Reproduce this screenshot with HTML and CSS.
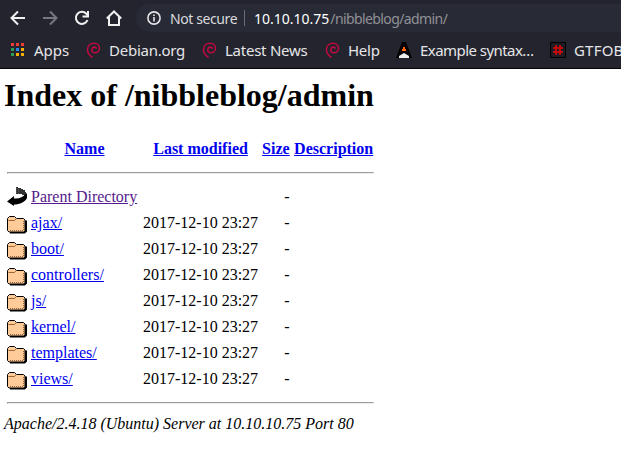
FILE: index.html
```html
<!DOCTYPE html>
<html lang="en">
<head>
<meta charset="utf-8">
<title>Index of /nibbleblog/admin</title>
<link rel="stylesheet" href="styles.css">
</head>
<body>
<svg class="defs" width="0" height="0">
  <symbol id="swirl" viewBox="-1 0 16 16"><path d="M6.500 15.500c-3-2-5.200-4.700-5-8.500C1.800 3.500 4.500 1.200 8 1.200c3.500 0 5.500 2.500 5.500 5s-2 4.500-4.500 4.500S5.500 9 5.800 7.300c.5-2.600 4-3.100 4.700-.5" fill="none" stroke="#bd0a40" stroke-width="1.600"/></symbol>
  <symbol id="folder" viewBox="0 0 20 22"><path d="M3 20.500h14.500l1.500-1.500V8.500" fill="none" stroke="#000" stroke-width="2"/><path d="M.5 18.500v-12l2-2h5l2 2h7l1.500 1.500v11l-1 1h-15z" fill="#fc9" stroke="#000"/><path d="M1.500 8.500h6l2-2" fill="none" stroke="#963"/><path d="M3 18.500h13.500V8" fill="none" stroke="#963" stroke-dasharray="1 1"/></symbol>
</svg>
<header class="browser">
  <div class="toolbar">
    <svg class="nav" viewBox="0 0 16 16"><path d="M15 8H2M8 1.500 1.500 8 8 14.500" /></svg>
    <svg class="nav dim" viewBox="0 0 16 16"><path d="M1 8h13M8 1.500 14.500 8 8 14.500" /></svg>
    <svg class="nav" viewBox="0 0 16 16"><path d="M13.500 10A6 6 0 1 1 12.300 3.800L14 5.500M14 1v5.500H8.500" /></svg>
    <svg class="nav" viewBox="0 0 16 16"><path d="M.8 8.500 8 1.500l7.200 7M3 7v8h3.500M13 7v8H9.500M6 15h4" /></svg>
    <div class="address">
      <svg class="info" viewBox="0 0 14 14"><circle cx="7" cy="7" r="6.100"/><path d="M7 6v4.500M7 3.500v1.500"/></svg>
      <span class="state">Not secure</span><i class="divider"></i><span class="host">10.10.10.75</span><span class="path">/nibbleblog/admin/</span>
    </div>
  </div>
  <nav class="bookmarks">
    <a class="mark apps"><svg width="13" height="13" viewBox="0 0 13 13"><path fill="#f33b35" d="M0 0h3v3H0zM5 0h3v3H5zM10 0h3v3h-3z"/><path fill="#2f9e55" d="M0 5h3v3H0zM0 10h3v3H0z"/><path fill="#2684fc" d="M5 5h3v3H5z"/><path fill="#fbb003" d="M10 5h3v3h-3zM5 10h3v3H5zM10 10h3v3h-3z"/></svg>Apps</a>
    <a class="mark debian"><svg width="16" height="16"><use href="#swirl"/></svg>Debian.org</a>
    <a class="mark news"><svg width="16" height="16"><use href="#swirl"/></svg>Latest News</a>
    <a class="mark help"><svg width="16" height="16"><use href="#swirl"/></svg>Help</a>
    <a class="mark syntax"><svg width="16" height="16" viewBox="0 0 16 16"><path d="M6 0h4l6 16H0z"/><path fill="#f60" d="M7 5h2v2h1v2H6V7h1z"/><path fill="#eee" d="M3 16v-2l5-3 5 3v2z"/></svg>Example syntax…</a>
    <a class="mark gtfo"><svg width="16" height="16" viewBox="0 0 16 16"><path fill="#1b1c24" stroke="#000" d="M.5.500h15v15H.5z"/><path stroke="#c00b0b" stroke-width="2" d="M6 3v10M10 3v10M3 6h10M3 10h10"/></svg>GTFOBins</a>
  </nav>
</header>
<main>
<h1>Index of /nibbleblog/admin</h1>
<table>
<tr><th class="icon"></th><th class="name"><a href="#">Name</a></th><th><a href="#">Last modified</a></th><th><a href="#">Size</a></th><th class="desc"><a href="#">Description</a></th></tr>
<tr><th colspan="5"><hr></th></tr>
<tr><td class="icon"><svg width="20" height="22" viewBox="0 0 20 22"><path d="M9 1h2v1h3v1h2v1h2v2h1v2h1v3h-3V9h-2V8H9z" fill="#333"/><path d="M9.500 2v6M11.500 3v6" stroke="#777" stroke-width=".6" stroke-dasharray="1 1"/><path d="M0 15.500 7 10v2.500c5 .5 9-1 12-5h1V12c-2 4-7 6.500-13 6.500V20z"/></svg></td><td><a class="visited" href="#">Parent Directory</a></td><td></td><td class="num">-</td><td></td></tr>
<tr><td class="icon"><svg width="20" height="22"><use href="#folder"/></svg></td><td><a href="#">ajax/</a></td><td class="num">2017-12-10 23:27</td><td class="num">-</td><td></td></tr>
<tr><td class="icon"><svg width="20" height="22"><use href="#folder"/></svg></td><td><a href="#">boot/</a></td><td class="num">2017-12-10 23:27</td><td class="num">-</td><td></td></tr>
<tr><td class="icon"><svg width="20" height="22"><use href="#folder"/></svg></td><td><a href="#">controllers/</a></td><td class="num">2017-12-10 23:27</td><td class="num">-</td><td></td></tr>
<tr><td class="icon"><svg width="20" height="22"><use href="#folder"/></svg></td><td><a href="#">js/</a></td><td class="num">2017-12-10 23:27</td><td class="num">-</td><td></td></tr>
<tr><td class="icon"><svg width="20" height="22"><use href="#folder"/></svg></td><td><a href="#">kernel/</a></td><td class="num">2017-12-10 23:27</td><td class="num">-</td><td></td></tr>
<tr><td class="icon"><svg width="20" height="22"><use href="#folder"/></svg></td><td><a href="#">templates/</a></td><td class="num">2017-12-10 23:27</td><td class="num">-</td><td></td></tr>
<tr><td class="icon"><svg width="20" height="22"><use href="#folder"/></svg></td><td><a href="#">views/</a></td><td class="num">2017-12-10 23:27</td><td class="num">-</td><td></td></tr>
<tr><th colspan="5"><hr></th></tr>
</table>
<address>Apache/2.4.18 (Ubuntu) Server at 10.10.10.75 Port 80</address>
</main>
</body>
</html>
```
FILE: styles.css
```css
body { margin: 0; background: #fff; font: 16px "Liberation Serif", serif; overflow: hidden; }
.defs { display: block; }
.browser { height: 69px; box-sizing: border-box; border-bottom: 1px solid #050507; background: #23242e; font: 15px "Noto Sans", sans-serif; overflow: hidden; }
.toolbar { display: flex; align-items: center; height: 36px; padding-left: 10px; }
.nav { flex: none; width: 16px; height: 16px; margin-right: 16px; fill: none; stroke: #f1f1f2; stroke-width: 2; }
.dim { stroke: #77787d; }
.address { flex: 1; display: flex; align-items: center; align-self: flex-start; height: 28px; margin-top: 4px; margin-left: -2px; padding-left: 11px; border-radius: 14px 0 0 14px; background: #282a35; font-size: 14px; white-space: nowrap; }
.info { flex: none; width: 14px; height: 14px; margin-right: 9px; fill: none; stroke: #e5e5e7; stroke-width: 1.600; }
.state { width: 67px; color: #d9dade; letter-spacing: -0.4px; }
.divider { flex: none; width: 1px; height: 16px; margin: 0 9px 0 7px; background: #6c6d74; }
.host { color: #fff; }
.path { margin-left: 1px; color: #909197; letter-spacing: -0.6px; }
.bookmarks { display: flex; height: 27px; color: #e6e6e8; white-space: nowrap; }
.mark { display: flex; align-items: center; flex: none; gap: 8px; letter-spacing: -0.25px; }
.apps { width: 74px; padding-left: 11px; gap: 10px; letter-spacing: 0; }
.debian { width: 116px; }
.news { width: 123px; }
.help { width: 72px; }
.syntax { width: 154px; letter-spacing: -0.55px; }
.gtfo { letter-spacing: 0.2px; }
main { padding: 8px 4px 0; }
h1 { margin: 0 0 21px; font-size: 32px; line-height: 37px; }
table { border-spacing: 2px; }
th, td { padding: 1px; line-height: 18px; white-space: nowrap; }
.icon { width: 20px; height: 22px; }
.icon svg { display: block; }
th.name { width: 107px; padding-right: 2px; }
.desc { width: 80px; }
hr { margin: 8px 0; border-width: 1px; }
a[href] { color: #0000ee; text-decoration: underline; }
a.visited { color: #551a8b; }
.num { text-align: right; }
address { line-height: 18px; }
```
